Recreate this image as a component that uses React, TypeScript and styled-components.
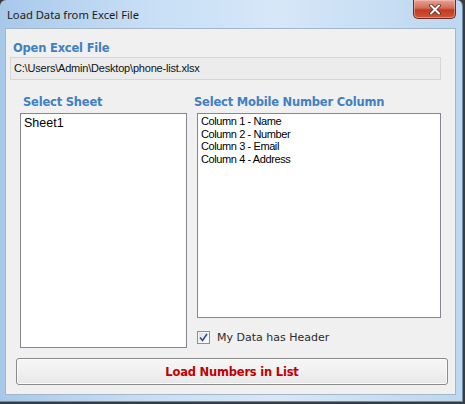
import React from "react";
import styled, { createGlobalStyle } from "styled-components";

const GlobalStyle = createGlobalStyle`
  html, body {
    margin: 0;
    padding: 0;
    background: #3b3b3b;
  }
  #root {
    width: 465px;
    height: 404px;
  }
`;

const Frame = styled.div`
  width: 463px;
  height: 402px;
  box-sizing: border-box;
  display: flex;
  flex-direction: column;
  border-radius: 6px 6px 0 0;
  background: linear-gradient(90deg, #a8c8ea 0%, #c6def5 30%, #d6e7f8 60%, #bcd7f0 100%);
  border-right: 1px solid #6f8aa6;
  border-bottom: 1px solid #6f8aa6;
`;

const TitleBar = styled.div`
  height: 28px;
  display: flex;
  align-items: flex-start;
  justify-content: space-between;
  padding-left: 7px;
`;

const Title = styled.span`
  font-family: "Noto Sans", "Open Sans", sans-serif;
  font-size: 11.2px;
  color: #1b1b1b;
  margin-top: 7px;
`;

const CloseButton = styled.div`
  width: 43px;
  height: 19px;
  margin-right: 6px;
  box-sizing: border-box;
  border: 1px solid #6b2b22;
  border-top: none;
  border-radius: 0 0 5px 5px;
  background: linear-gradient(180deg, #e7a396 0%, #d46b57 45%, #c23a22 55%, #d0563b 100%);
  display: flex;
  align-items: center;
  justify-content: center;
  box-shadow: inset 0 0 0 1px rgba(255, 210, 200, 0.45);
`;

const Client = styled.div`
  flex: 1;
  margin: 0 6px 6px 5px;
  background: #f0f0f0;
  border: 1px solid #a4b6c8;
  box-sizing: border-box;
  display: flex;
  flex-direction: column;
  padding: 11px 13px 8px 4px;
`;

const GroupLabel = styled.div<{ $indent?: number }>`
  font-family: "DejaVu Sans", Verdana, sans-serif;
  font-weight: bold;
  font-size: 11.5px;
  letter-spacing: -0.2px;
  color: #3f80c2;
  height: 17px;
  line-height: 17px;
  margin-left: ${(p) => p.$indent ?? 0}px;
`;

const PathBox = styled.div`
  height: 23px;
  box-sizing: border-box;
  margin-right: 1px;
  border: 1px solid #d6d6d6;
  background: #ececec;
  font-family: "Liberation Sans", Arial, sans-serif;
  font-size: 11px;
  color: #111;
  padding: 4px 0 0 3px;
  letter-spacing: -0.2px;
`;

const Columns = styled.div`
  display: flex;
  gap: 10px;
  margin-top: 14px;
  padding-left: 10px;
  padding-right: 1px;
`;

const LeftCol = styled.div`
  width: 167px;
  display: flex;
  flex-direction: column;
`;

const RightCol = styled.div`
  flex: 1;
  display: flex;
  flex-direction: column;
`;

const ListBox = styled.div<{ $height: number; $size: number; $spacing: number }>`
  height: ${(p) => p.$height}px;
  box-sizing: border-box;
  margin-top: 2px;
  background: #ffffff;
  border: 1px solid #828790;
  padding: 1px 3px;
  font-family: "Liberation Sans", Arial, sans-serif;
  font-size: ${(p) => p.$size}px;
  letter-spacing: ${(p) => p.$spacing}px;
  color: #000;
`;

const ListItem = styled.div<{ $line: number }>`
  line-height: ${(p) => p.$line}px;
  white-space: nowrap;
`;

const CheckRow = styled.label`
  display: flex;
  align-items: center;
  gap: 7px;
  margin-top: 12px;
  height: 14px;
  font-family: "DejaVu Sans", Verdana, sans-serif;
  font-size: 11px;
  color: #2b2b2b;
`;

const CheckBox = styled.span`
  width: 13px;
  height: 13px;
  box-sizing: border-box;
  border: 1px solid #8e8f8f;
  background: linear-gradient(135deg, #dcdcdc 0%, #f4f4f4 60%, #ffffff 100%);
  box-shadow: inset 0 0 0 1px #f4f4f4;
  display: flex;
  align-items: center;
  justify-content: center;
`;

const ActionButton = styled.button`
  height: 27px;
  margin: 10px 0 0 6px;
  width: 432px;
  box-sizing: border-box;
  border: 1px solid #8a8a8a;
  border-radius: 3px;
  background: linear-gradient(180deg, #f6f6f6 0%, #f0f0f0 50%, #e8e8e8 100%);
  box-shadow: inset 0 0 0 1px #fcfcfc;
  font-family: "DejaVu Sans", Verdana, sans-serif;
  font-weight: bold;
  font-size: 11.5px;
  letter-spacing: -0.2px;
  color: #c00000;
  cursor: pointer;
  padding: 0;
`;

const columns = [
  "Column 1 - Name",
  "Column 2 - Number",
  "Column 3 - Email",
  "Column 4 - Address",
];

export default function App() {
  return (
    <>
      <GlobalStyle />
      <Frame>
        <TitleBar>
          <Title>Load Data from Excel File</Title>
          <CloseButton>
            <svg width="12" height="11" viewBox="0 0 12 11">
              <path d="M2 1.5 L10 9.5 M10 1.5 L2 9.5" stroke="#5a2a22" strokeWidth="3.6" strokeLinecap="round" />
              <path d="M2 1.5 L10 9.5 M10 1.5 L2 9.5" stroke="#ffffff" strokeWidth="2" strokeLinecap="round" />
            </svg>
          </CloseButton>
        </TitleBar>
        <Client>
          <GroupLabel $indent={3}>Open Excel File</GroupLabel>
          <PathBox>C:\Users\Admin\Desktop\phone-list.xlsx</PathBox>
          <Columns>
            <LeftCol>
              <GroupLabel $indent={3}>Select Sheet</GroupLabel>
              <ListBox $height={235} $size={12.5} $spacing={0}>
                <ListItem $line={16}>Sheet1</ListItem>
              </ListBox>
            </LeftCol>
            <RightCol>
              <GroupLabel $indent={-3}>Select Mobile Number Column</GroupLabel>
              <ListBox $height={205} $size={11} $spacing={-0.4}>
                {columns.map((c) => (
                  <ListItem key={c} $line={12.6}>
                    {c}
                  </ListItem>
                ))}
              </ListBox>
              <CheckRow>
                <CheckBox>
                  <svg width="9" height="9" viewBox="0 0 9 9">
                    <path d="M1 4.5 L3.5 7.5 L8 1" fill="none" stroke="#2b4c9c" strokeWidth="1.6" />
                  </svg>
                </CheckBox>
                My Data has Header
              </CheckRow>
            </RightCol>
          </Columns>
          <ActionButton>Load Numbers in List</ActionButton>
        </Client>
      </Frame>
    </>
  );
}
